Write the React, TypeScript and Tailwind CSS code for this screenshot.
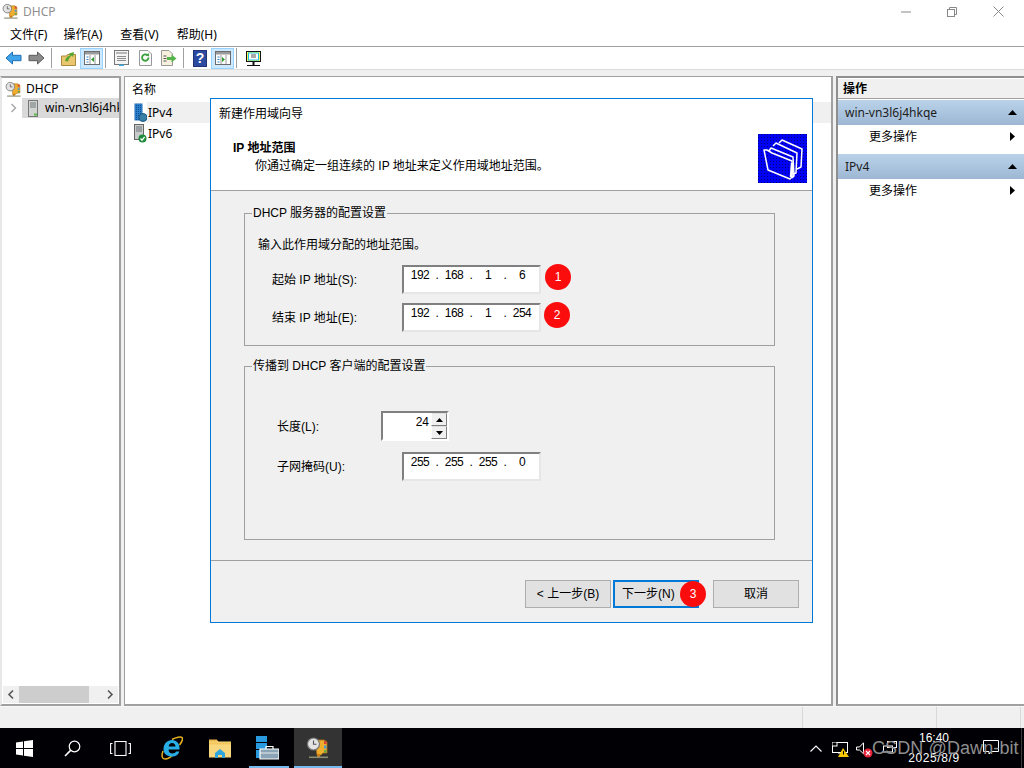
import React from "react";

const font = { fontFamily: '"Liberation Sans","Noto Sans CJK SC",sans-serif' };
const uiFont = { fontFamily: '"Noto Sans","Noto Sans CJK SC",sans-serif' };

function DhcpIcon({ size = 16 }: { size?: number }) {
  return (
    <svg width={size} height={size} viewBox="0 0 24 24" className="shrink-0">
      <path d="M9 4h9l3 2v11h-4l-2 2h-4z" fill="#f0ae2e" stroke="#a86f10" strokeWidth="0.8" />
      <rect x="18" y="5" width="2.5" height="3" fill="#d9433a" />
      <rect x="18" y="9.5" width="2.5" height="3" fill="#4f9bd4" />
      <rect x="18" y="14" width="2.5" height="2.5" fill="#62a84c" />
      <circle cx="7.5" cy="8" r="6" fill="#e3e3e3" stroke="#777" strokeWidth="1.2" />
      <path d="M7.5 4.5V8.3h3" fill="none" stroke="#555" strokeWidth="1.1" />
      <rect x="11" y="18" width="3" height="3" fill="#c97d14" />
      <rect x="3" y="20.5" width="19" height="1.6" fill="#8a8f72" />
    </svg>
  );
}

function ToolSep() {
  return <div className="w-px h-[20px] bg-[#a0a0a0]" />;
}

function Back({ color, dark }: { color: string; dark: string }) {
  return (
    <svg width="17" height="14" viewBox="0 0 17 14">
      <path d="M1 7 7.5 1v3.3h8.5v5.4H7.5V13z" fill={color} stroke={dark} strokeWidth="1" />
    </svg>
  );
}

function Forward() {
  return (
    <svg width="17" height="14" viewBox="0 0 17 14">
      <path d="M16 7 9.5 1v3.3H1v5.4h8.5V13z" fill="#8b8b8b" stroke="#5c5c5c" strokeWidth="1" />
    </svg>
  );
}

function PaneIcon({ right }: { right?: boolean }) {
  return (
    <svg width="16" height="14" viewBox="0 0 16 14">
      <rect x="0.5" y="0.5" width="15" height="13" fill="#fff" stroke="#6b6b6b" />
      <rect x="1" y="1" width="14" height="2.5" fill="#9a9a9a" />
      <path d="M6 4v9M11 4v9" stroke="#9a9a9a" />
      <path d="M2.5 6h2M2.5 8.5h2M2.5 11h2" stroke="#2f7fc4" />
      {right ? <path d="M7 6l3 2.5L7 11z" fill="#2d9a2d" /> : <path d="M10 6 7 8.5l3 2.5z" fill="#2d9a2d" />}
    </svg>
  );
}

function Toolbar() {
  return (
    <div className="h-[22px] flex items-center bg-white">
      <div className="ml-[5px]"><Back color="#3fa4ea" dark="#1e6fb5" /></div>
      <div className="ml-[6px]"><Forward /></div>
      <div className="ml-[6px]"><ToolSep /></div>
      <div className="ml-[9px]">
        <svg width="15" height="15" viewBox="0 0 15 15">
          <path d="M0.5 5h5l1-1.5h8V14.5H0.5z" fill="#eac66f" stroke="#a98a3e" />
          <path d="M4 10C5 6 7 5 9 4.5L8 2.5l5-1.5-1 5-1.5-1.5C9 6 7.5 8 7 10.5z" fill="#55a630" />
        </svg>
      </div>
      <div className="ml-[4px] w-[23px] h-[21px] bg-[#cce8ff] border border-[#99d1ff] flex items-center justify-center"><PaneIcon /></div>
      <div className="ml-[2px]"><ToolSep /></div>
      <div className="ml-[8px]">
        <svg width="15" height="16" viewBox="0 0 15 16">
          <rect x="0.5" y="0.5" width="14" height="14" fill="#f4f4f4" stroke="#777" />
          <rect x="2" y="2" width="11" height="2" fill="#b5b5b5" />
          <path d="M3 6.5h9M3 8.5h9M3 10.5h9" stroke="#8b8b8b" />
          <rect x="5" y="14.5" width="5" height="1.5" fill="#40a8d8" />
        </svg>
      </div>
      <div className="ml-[10px]">
        <svg width="13" height="16" viewBox="0 0 13 16">
          <path d="M0.5 0.5H9L12.5 4V15.5H0.5z" fill="#fbfbfb" stroke="#999" />
          <path d="M9.5 7.5a3.2 3.2 0 1 1-1-2.3" fill="none" stroke="#3aa03a" strokeWidth="1.8" />
          <path d="M9.8 3 10 6.5 6.8 5.6z" fill="#3aa03a" />
        </svg>
      </div>
      <div className="ml-[9px]">
        <svg width="16" height="16" viewBox="0 0 16 16">
          <path d="M0.5 0.5H8L11.5 4V15.5H0.5z" fill="#f6f0dc" stroke="#999" />
          <path d="M2.5 6h3M2.5 8.5h3M2.5 11h3" stroke="#555" />
          <path d="M6 7h4.5V4.5L15.5 8.5l-5 4V10H6z" fill="#56b44c" />
        </svg>
      </div>
      <div className="ml-[6px]"><ToolSep /></div>
      <div className="ml-[9px]">
        <div className="w-[14px] h-[17px] bg-[#2c4ba0] border border-[#22337a] flex items-center justify-center text-white text-[14px] font-bold leading-none" style={font}>?</div>
      </div>
      <div className="ml-[4px] w-[23px] h-[21px] bg-[#cce8ff] border border-[#99d1ff] flex items-center justify-center"><PaneIcon right /></div>
      <div className="ml-[2px]"><ToolSep /></div>
      <div className="ml-[8px]">
        <svg width="17" height="17" viewBox="0 0 17 17">
          <rect x="1" y="1" width="15" height="11" fill="#111" />
          <rect x="2" y="2" width="13" height="9" fill="#fdf65a" />
          <rect x="3.5" y="3" width="10" height="7" fill="#fff" stroke="#19c5e6" />
          <path d="M6 5h5M6 7h5" stroke="#555" />
          <rect x="7.5" y="12" width="2" height="3" fill="#111" />
          <rect x="2" y="15" width="13" height="1" fill="#111" />
        </svg>
      </div>
    </div>
  );
}

function ServerIcon() {
  return (
    <svg width="12" height="17" viewBox="0 0 12 17" className="shrink-0">
      <rect x="1.5" y="0.5" width="9" height="16" fill="#d2d4d2" stroke="#777" />
      <path d="M3 3h6M3 5h6M3 7h6" stroke="#6f7679" />
      <rect x="7" y="13.5" width="3" height="2" fill="#58b947" />
    </svg>
  );
}

function Ip4Icon() {
  return (
    <svg width="13" height="19" viewBox="0 0 13 19" className="shrink-0">
      <defs>
        <pattern id="ip4p" width="2" height="2" patternUnits="userSpaceOnUse">
          <rect width="2" height="2" fill="#2a7fc8" />
          <rect width="1" height="1" fill="#0d4f95" />
        </pattern>
      </defs>
      <rect x="0.5" y="0.5" width="8" height="17" fill="url(#ip4p)" />
      <circle cx="9" cy="14.5" r="4" fill="#3a7fa8" stroke="#1a5a80" />
    </svg>
  );
}

function Ip6Icon() {
  return (
    <svg width="13" height="19" viewBox="0 0 13 19" className="shrink-0">
      <rect x="0.5" y="0.5" width="9" height="15" fill="#c9cccc" stroke="#666" />
      <path d="M2 3h6M2 5h6M2 7h6" stroke="#6d7578" />
      <circle cx="8.5" cy="14.5" r="4" fill="#1f8a3a" />
      <path d="M6.5 14.5l1.5 1.7 2.6-3.2" fill="none" stroke="#fff" strokeWidth="1.2" />
    </svg>
  );
}

function Tree() {
  return (
    <div className="w-[121px] shrink-0 bg-white border-[2px] border-[#a0a0a0] border-l-[#e8e8e8] flex flex-col" style={uiFont}>
      <div className="flex-1 pt-[2px] pl-[1px]">
        <div className="flex items-center h-[18px] pl-[2px]">
          <DhcpIcon size={17} />
          <span className="ml-[4px] text-[12px] text-black">DHCP</span>
        </div>
        <div className="flex items-center h-[20px]">
          <svg width="8" height="10" viewBox="0 0 8 10" className="ml-[7px] shrink-0">
            <path d="M1.5 1 5.500 5 1.500 9" fill="none" stroke="#a6a6a6" strokeWidth="1.4" />
          </svg>
          <div className="ml-[4px] w-[97px] h-[20px] bg-[#d9d9d9] flex items-center pl-[5px] overflow-hidden whitespace-nowrap">
            <ServerIcon />
            <span className="ml-[6px] text-[12px] text-black">win-vn3l6j4hkqe</span>
          </div>
        </div>
      </div>
      <div className="h-[17px] mb-[1px] mx-[1px] bg-[#f0f0f0] flex items-center">
        <svg width="16" height="15" viewBox="0 0 16 15">
          <path d="M10 3.5 6 7.5l4 4" fill="none" stroke="#555" strokeWidth="1.6" />
        </svg>
        <div className="w-[70px] h-full bg-[#cdcdcd]" />
        <div className="flex-1" />
        <svg width="16" height="15" viewBox="0 0 16 15">
          <path d="M6 3.5l4 4-4 4" fill="none" stroke="#555" strokeWidth="1.6" />
        </svg>
      </div>
    </div>
  );
}

function Center() {
  return (
    <div className="ml-[3px] w-[709px] shrink-0 bg-white border border-[#a0a0a0] border-b-[2px] border-r-[2px]" style={uiFont}>
      <div className="h-[25px] pl-[7px] flex items-center text-[12px] text-black">名称</div>
      <div className="flex items-center h-[21px] pl-[9px]">
        <Ip4Icon />
        <div className="h-[21px] flex-1 bg-[#f0f0f0] flex items-center pl-[1px] text-[12px] text-black">IPv4</div>
      </div>
      <div className="flex items-center h-[21px] pl-[9px]">
        <Ip6Icon />
        <div className="pl-[1px] text-[12px] text-black">IPv6</div>
      </div>
    </div>
  );
}

function ActionHeader({ text }: { text: string }) {
  return (
    <div className="h-[25px] bg-gradient-to-b from-[#bad3ea] to-[#9db7d4] flex items-center pl-[7px] pr-[7px] justify-between text-[12px] text-[#1c1c1c]">
      <span>{text}</span>
      <svg width="9" height="5" viewBox="0 0 9 5"><path d="M4.5 0 9 5H0z" fill="#000" /></svg>
    </div>
  );
}

function ActionRow() {
  return (
    <div className="h-[25px] pb-[2px] flex items-center pl-[31px] pr-[7px] justify-between text-[12px] text-black bg-white">
      <span>更多操作</span>
      <svg width="5" height="9" viewBox="0 0 5 9" className="mr-[2px]"><path d="M0 0l5 4.500L0 9z" fill="#000" /></svg>
    </div>
  );
}

function Actions() {
  return (
    <div className="ml-[3px] flex-1 bg-white border-[2px] border-[#8f8f8f] border-r-0 border-b-[#a0a0a0]" style={uiFont}>
      <div className="h-[20px] mt-px bg-[#f0f0f0] border-b border-[#a0a0a0] flex items-center pl-[5px] text-[12px] font-bold text-black">操作</div>
      <div className="h-[1px]" />
      <ActionHeader text="win-vn3l6j4hkqe" />
      <ActionRow />
      <div className="h-[4px]" />
      <ActionHeader text="IPv4" />
      <ActionRow />
    </div>
  );
}

function Octets({ values }: { values: string[] }) {
  return (
    <div className="flex text-[12px] leading-[14px] text-black pl-[3px] pt-[1px] tracking-[-0.5px]">
      {values.map((v, i) => (
        <React.Fragment key={i}>
          <span className="w-[26px] text-center">{v}</span>
          {i < 3 && <span className="w-[8px] text-center">.</span>}
        </React.Fragment>
      ))}
    </div>
  );
}

const sunken = "bg-white border-[2px] border-t-[#808080] border-l-[#808080] border-r-[#e6e6e6] border-b-[#e6e6e6]";

function IpField({ values }: { values: string[] }) {
  return (
    <div className={`w-[139px] h-[29px] ${sunken}`}>
      <Octets values={values} />
    </div>
  );
}

function Badge({ n, className }: { n: number; className: string }) {
  return (
    <div className={`absolute w-[26px] h-[26px] rounded-full bg-[#fb0d0d] text-white text-[12px] flex items-center justify-center ${className}`}>{n}</div>
  );
}

function Dialog() {
  return (
    <div className="absolute left-[210px] top-[98px] w-[603px] h-[525px] border border-[#0078d7] bg-[#f0f0f0] flex flex-col text-[12px] text-black" style={font}>
      <div className="h-[92px] shrink-0 bg-white border-b border-[#a0a0a0] relative">
        <div className="pl-[8px] pt-[8px] leading-[14px]">新建作用域向导</div>
        <div className="pl-[22px] pt-[20px] leading-[14px] font-bold">IP 地址范围</div>
        <div className="pl-[44px] pt-[4px] leading-[14px]">你通过确定一组连续的 IP 地址来定义作用域地址范围。</div>
        <div className="absolute left-[547px] top-[35px]">
          <svg width="49" height="49" viewBox="0 0 49 49" shapeRendering="crispEdges">
            <defs>
              <pattern id="wizdots" width="3" height="3" patternUnits="userSpaceOnUse">
                <rect width="3" height="3" fill="#0000f5" />
                <rect width="1" height="1" fill="#00007a" />
              </pattern>
            </defs>
            <rect width="49" height="49" fill="url(#wizdots)" />
            <g fill="none" stroke="#fff" strokeWidth="1.5" strokeLinejoin="round" shapeRendering="geometricPrecision">
              <path d="M21 9 24 6l20 9-1 18-4 2" />
              <path d="M15 12l3-3 21 10-1 20-3 1" />
              <path d="M11 17l2-3 22 9 1 19-2 2" />
              <path d="M6 16l3 0 5 3 20 8 0 2 1 13-3 3L10 36z" />
              <path d="M33 43 34 29" strokeWidth="2.5" />
            </g>
          </svg>
        </div>
      </div>
      <div className="flex-1 pl-[33px]">
        <fieldset className="mt-[14px] w-[531px] h-[141px] border border-[#a0a0a0] pl-[13px]">
          <legend className="ml-[-6px] px-[1px] leading-[16px] bg-[#f0f0f0]">DHCP 服务器的配置设置</legend>
          <div className="mt-[17px] leading-[14px]">输入此作用域分配的地址范围。</div>
          <div className="mt-[13px] flex items-center">
            <span className="pl-[14px] w-[144px]">起始 IP 地址(S):</span>
            <IpField values={["192", "168", "1", "6"]} />
          </div>
          <div className="mt-[9px] flex items-center">
            <span className="pl-[14px] w-[144px]">结束 IP 地址(E):</span>
            <IpField values={["192", "168", "1", "254"]} />
          </div>
        </fieldset>
        <fieldset className="mt-[12px] w-[531px] h-[182px] border border-[#a0a0a0] pl-[32px]">
          <legend className="ml-[-25px] px-[1px] leading-[16px] bg-[#f0f0f0]">传播到 DHCP 客户端的配置设置</legend>
          <div className="mt-[37px] flex items-center">
            <span className="w-[104px] pt-[1px]">长度(L):</span>
            <div className={`w-[68px] h-[30px] ${sunken} border-b-white border-r-white flex`}>
              <div className="flex-1 text-right pr-[2px] pt-[2px] leading-[14px]">24</div>
              <div className="w-[16px] h-[26px] flex flex-col">
                <div className="h-[13px] bg-[#f0f0f0] border border-[#808080] border-t-[#e0e0e0] border-l-white flex items-center justify-center">
                  <svg width="7" height="4" viewBox="0 0 7 4"><path d="M3.5 0 7 4H0z" fill="#000" /></svg>
                </div>
                <div className="h-[13px] bg-[#f0f0f0] border border-[#808080] border-t-[#e0e0e0] border-l-white flex items-center justify-center">
                  <svg width="7" height="4" viewBox="0 0 7 4"><path d="M0 0h7L3.5 4z" fill="#000" /></svg>
                </div>
              </div>
            </div>
          </div>
          <div className="mt-[11px] flex items-center">
            <span className="w-[125px]">子网掩码(U):</span>
            <IpField values={["255", "255", "255", "0"]} />
          </div>
        </fieldset>
      </div>
      <div className="h-[62px] shrink-0 border-t border-[#a0a0a0] pl-[314px] pt-[19px] flex items-start">
        <button className="w-[86px] h-[28px] bg-[#e1e1e1] border border-[#adadad]">&lt; 上一步(B)</button>
        <button className="ml-[2px] w-[86px] h-[28px] bg-[#e1e1e1] border-[2px] border-[#0078d7] text-left pl-[7px]">下一步(N)</button>
        <button className="ml-[14px] w-[86px] h-[28px] bg-[#e1e1e1] border border-[#adadad]">取消</button>
      </div>
      <Badge n={1} className="left-[334px] top-[165px]" />
      <Badge n={2} className="left-[333px] top-[203px]" />
      <Badge n={3} className="left-[469px] top-[482px]" />
    </div>
  );
}

function Taskbar() {
  return (
    <div className="h-[40px] bg-[#000005] flex items-center relative shrink-0" style={font}>
      <div className="w-[48px] h-full flex items-center justify-center">
        <svg width="17" height="17" viewBox="0 0 17 17">
          <path d="M0 2.4 7 1.4V8H0zM8 1.2 17 0v8H8zM0 9h7v6.600L0 14.600zM8 9h9v8l-9-1.200z" fill="#fff" />
        </svg>
      </div>
      <div className="w-[48px] h-full flex items-center justify-center">
        <svg width="17" height="17" viewBox="0 0 17 17" fill="none" stroke="#fff" strokeWidth="1.2">
          <circle cx="10.5" cy="6.500" r="5.300" />
          <path d="M6.600 10.400 1 16" strokeWidth="1.600" />
        </svg>
      </div>
      <div className="w-[48px] h-full flex items-center justify-center">
        <svg width="21" height="15" viewBox="0 0 21 15" fill="none" stroke="#fff" strokeWidth="1.1">
          <rect x="5" y="0.5" width="11" height="14" />
          <path d="M2.5 2.500H0.600v10h1.900M18.500 2.500h1.900v10h-1.900" />
        </svg>
      </div>
      <div className="w-[48px] h-full flex items-center justify-center pl-[6px]">
        <svg width="24" height="24" viewBox="0 0 24 24">
          <path d="M4 15C2 20 3 23 6 23c3 0 6-2 9-5" fill="none" stroke="#e6b01e" strokeWidth="1.5" />
          <path d="M13 3.500C17 1 22 .5 23 1.500c1 1.500-.5 5-2.500 7.500" fill="none" stroke="#e6b01e" strokeWidth="1.5" />
          <path d="M4.500 13.500C4.500 7.500 8.500 4 13 4s8 3.500 7.500 9.500H9.500c.2 3 2 4 4 4 1.700 0 3-.7 3.700-2h3.200c-1 3.200-3.700 5-7 5-5 0-8.900-2.500-8.900-7zM9.700 10.500h6.900C16.300 8.400 15 7 13 7s-3 1.400-3.300 3.500z" fill="#28aee6" fillRule="evenodd" />
        </svg>
      </div>
      <div className="w-[48px] h-full flex items-center justify-center pl-[7px]">
        <svg width="22" height="19" viewBox="0 0 22 19">
          <path d="M0 1h8l1.500 1.500H22v16H0z" fill="#f9d77e" />
          <path d="M0 3.500h22v2H0z" fill="#f2c65a" />
          <rect x="0" y="0.5" width="8" height="2" fill="#e8b84a" />
          <path d="M6 19v-5l5-4 5 4v5h-3v-3H9v3z" fill="#31a6dd" />
        </svg>
      </div>
      <div className="w-[54px] h-full flex items-center justify-center relative">
        <svg width="24" height="24" viewBox="0 0 24 24">
          <rect x="1" y="0" width="11" height="6" fill="#2a9ae0" />
          <rect x="1" y="7" width="11" height="6" fill="#2a9ae0" />
          <rect x="1" y="14" width="6" height="8" fill="#2a9ae0" />
          <path d="M5 13h19v10H5z" fill="#8aa3b5" stroke="#fff" strokeWidth="1.2" />
          <path d="M11 13v-2.500h7V13" fill="none" stroke="#fff" strokeWidth="1.2" />
          <path d="M5 17h19" stroke="#fff" strokeWidth="0.8" />
        </svg>
        <div className="absolute left-[9px] right-[5px] bottom-0 h-[2px] bg-[#76b9ed]" />
      </div>
      <div className="w-[48px] h-full bg-[#333333] flex items-center justify-center relative">
        <DhcpIcon size={24} />
        <div className="absolute left-0 right-0 bottom-0 h-[2px] bg-[#76b9ed]" />
      </div>
      <div className="flex-1" />
      <svg width="12" height="7" viewBox="0 0 12 7" className="absolute left-[810px] top-[17px]" fill="none" stroke="#fff" strokeWidth="1.1">
        <path d="M.5 6.500 6 1l5.500 5.500" />
      </svg>
      <svg width="17" height="15" viewBox="0 0 17 15" className="absolute left-[832px] top-[14px]">
        <rect x="0.5" y="0.5" width="15" height="10" fill="none" stroke="#fff" />
        <rect x="0" y="0" width="5" height="4" fill="#000" stroke="#fff" />
        <path d="M7 10v2" stroke="#fff" />
        <path d="M11 6 17 15H6z" fill="#f7c800" />
        <rect x="11" y="9" width="1" height="3.500" fill="#000" />
      </svg>
      <svg width="18" height="17" viewBox="0 0 18 17" className="absolute left-[856px] top-[14px]">
        <path d="M.5 5h3L7.500.8v11L3.500 8h-3z" fill="none" stroke="#fff" />
        <circle cx="12" cy="11" r="4.500" fill="#e8243a" />
        <path d="M10 9l4 4M14 9l-4 4" stroke="#fff" strokeWidth="1.1" />
      </svg>
      <svg width="14" height="15" viewBox="0 0 14 15" className="absolute left-[883px] top-[13px]" fill="none" stroke="#fff">
        <rect x="0.5" y="5" width="9" height="6" />
        <rect x="4.5" y="0.5" width="9" height="6" />
      </svg>
      <div className="absolute left-[903px] top-0 w-[62px] h-[40px] flex flex-col items-center text-white text-[12px] leading-[20px]">
        <span>16:40</span>
        <span className="tracking-[0.6px]">2025/8/9</span>
      </div>
      <svg width="16" height="15" viewBox="0 0 16 15" className="absolute left-[983px] top-[12px]" fill="none" stroke="#fff">
        <path d="M.5.5h15v11H8l-2 2.500v-2.500H.5z" />
      </svg>
      <div className="absolute left-[872px] top-[9px] text-[18px] tracking-[0.1px] leading-[22px] text-[#8f8f8f] whitespace-nowrap">CSDN @Dawn-bit</div>
      <div className="absolute right-[2px] top-0 bottom-0 w-px bg-[#3a3a3a]" />
    </div>
  );
}

export default function App() {
  return (
    <div className="relative w-[1024px] h-[768px] overflow-hidden bg-[#f0f0f0] flex flex-col" style={uiFont}>
      <div className="h-[23px] bg-white flex items-center shrink-0 relative">
        <div className="ml-[2px]"><DhcpIcon size={17} /></div>
        <span className="ml-[4px] text-[12px] text-[#8f8f8f]">DHCP</span>
        <div className="flex-1" />
        <svg width="10" height="10" viewBox="0 0 10 10" className="mr-[36px]"><path d="M0 5h10" stroke="#888" /></svg>
        <svg width="10" height="10" viewBox="0 0 10 10" className="mr-[36px]" fill="none" stroke="#888">
          <rect x="0.5" y="2.5" width="7" height="7" />
          <path d="M2.500 2.500V.5h7v7h-2" />
        </svg>
        <svg width="11" height="11" viewBox="0 0 11 11" className="mr-[20px]" stroke="#888"><path d="M.5.5l10 10M10.500.5l-10 10" /></svg>
      </div>
      <div className="h-[24px] bg-white flex items-center pl-[10px] gap-[18px] text-[12px] text-black shrink-0 border-b border-[#a0a0a0]">
        <span className="mr-[-2px]">文件(F)</span>
        <span>操作(A)</span>
        <span>查看(V)</span>
        <span>帮助(H)</span>
      </div>
      <div className="shrink-0"><Toolbar /></div>
      <div className="h-[7px] shrink-0 bg-[#f0f0f0] border-t border-[#dcdcdc]" />
      <div className="h-[630px] shrink-0 flex">
        <Tree />
        <Center />
        <Actions />
      </div>
      <div className="h-[22px] shrink-0 bg-[#f0f0f0] flex border-t border-[#f8f8f8]">
        <div className="w-[803px] border-r border-[#d8d8d8]" />
        <div className="w-[134px] border-r border-[#d8d8d8]" />
        <div className="w-[84px] border-r border-[#d8d8d8]" />
      </div>
      <Taskbar />
      <Dialog />
    </div>
  );
}
